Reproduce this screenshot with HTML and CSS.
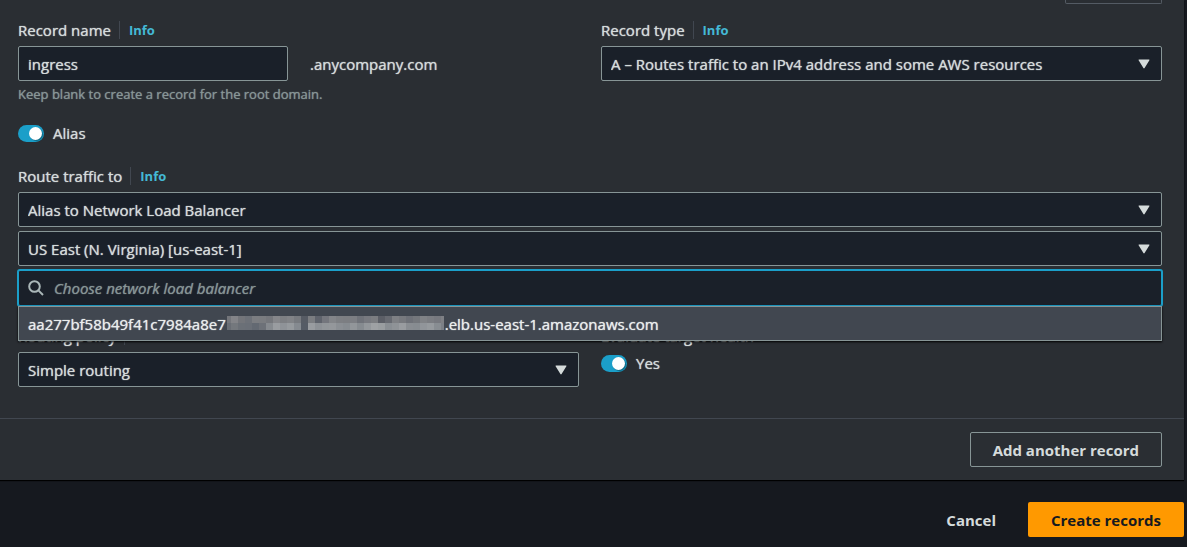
FILE: index.html
```html
<!DOCTYPE html>
<html lang="en">
<head>
<meta charset="utf-8">
<title>Create record</title>
<link rel="stylesheet" href="styles.css">
</head>
<body>
<form class="page">
  <section class="panel">
    <div class="record">
      <div class="record-head"><button class="delete" type="button" aria-label="Delete record" disabled></button></div>

      <div class="columns">
        <div class="field">
          <div class="label-row"><label for="name">Record name</label><a class="info" href="#name-info">Info</a></div>
          <div class="name-row">
            <input class="control name-input" id="name" type="text" value="ingress">
            <span>.anycompany.com</span>
          </div>
          <p class="hint">Keep blank to create a record for the root domain.</p>
        </div>
        <div class="field">
          <div class="label-row"><label for="type">Record type</label><a class="info" href="#type-info">Info</a></div>
          <div class="select">
            <select class="control" id="type"><option>A – Routes traffic to an IPv4 address and some AWS resources</option></select>
            <svg class="caret" viewBox="0 0 12 10"><path d="M1 .5h10a.5.5 0 0 1 .4.8L6.6 9a.7.7 0 0 1-1.200 0L.6 1.300A.5.5 0 0 1 1 .5z"/></svg>
          </div>
        </div>
      </div>

      <label class="toggle alias"><input type="checkbox" checked>Alias</label>

      <div class="label-row"><label for="target">Route traffic to</label><a class="info" href="#route-info">Info</a></div>
      <div class="stack">
        <div class="select">
          <select class="control" id="target"><option>Alias to Network Load Balancer</option></select>
          <svg class="caret" viewBox="0 0 12 10"><path d="M1 .5h10a.5.5 0 0 1 .4.8L6.6 9a.7.7 0 0 1-1.200 0L.6 1.300A.5.5 0 0 1 1 .5z"/></svg>
        </div>
        <div class="select">
          <select class="control" aria-label="Region"><option>US East (N. Virginia) [us-east-1]</option></select>
          <svg class="caret" viewBox="0 0 12 10"><path d="M1 .5h10a.5.5 0 0 1 .4.8L6.6 9a.7.7 0 0 1-1.200 0L.6 1.300A.5.5 0 0 1 1 .5z"/></svg>
        </div>
        <div class="search">
          <input class="control search-input" type="text" aria-label="Load balancer" placeholder="Choose network load balancer">
          <svg class="glass" viewBox="0 0 16 16"><circle cx="6.500" cy="6.500" r="5.300"/><path d="M10.400 10.400 15 15"/></svg>
          <div class="menu" role="listbox">
            <div class="menu-item" role="option" aria-selected="true"><span>aa277bf58b49f41c7984a8e7</span><svg class="mosaic" viewBox="0 0 217 15" aria-hidden="true"></svg><span>.elb.us-east-1.amazonaws.com</span></div>
          </div>
        </div>
      </div>

      <div class="columns routing">
        <div class="field">
          <div class="label-row"><label for="policy">Routing policy</label><a class="info" href="#policy-info">Info</a></div>
          <div class="select">
            <select class="control" id="policy"><option>Simple routing</option></select>
            <svg class="caret" viewBox="0 0 12 10"><path d="M1 .5h10a.5.5 0 0 1 .4.8L6.6 9a.7.7 0 0 1-1.200 0L.6 1.300A.5.5 0 0 1 1 .5z"/></svg>
          </div>
        </div>
        <div class="field">
          <div class="label-row" id="health">Evaluate target health</div>
          <label class="toggle"><input type="checkbox" aria-describedby="health" checked>Yes</label>
        </div>
      </div>
    </div>
    <div class="panel-foot"><button class="button outline" type="button">Add another record</button></div>
  </section>
  <div class="actions">
    <button class="button plain" type="button">Cancel</button>
    <button class="button primary" type="submit">Create records</button>
  </div>
</form>
<script src="mosaic.js"></script>
</body>
</html>
```
FILE: styles.css
```css
* { box-sizing: border-box; }

body {
  margin: 0;
  min-height: 100vh;
  background: #16191f;
  color: #d5dbdb;
  font: 500 15px/22px "Open Sans", "Noto Sans", sans-serif;
  text-shadow: 0 0 1px currentColor;
}

.page { padding-right: 3px; }

.panel {
  background: #2a2e33;
  box-shadow: 0 1px 1px #000;
}

.record { padding: 0 22px 31px 18px; }

.record-head {
  display: flex;
  justify-content: flex-end;
  margin-bottom: 16px;
}

.delete {
  width: 97px;
  height: 4px;
  padding: 0;
  background: none;
  border: 1px solid #545b64;
  border-top: 0;
  border-radius: 0 0 2px 2px;
}

.columns {
  display: grid;
  grid-template-columns: 1fr 1fr;
  gap: 22px;
}

.label-row {
  display: flex;
  align-items: center;
  height: 20px;
  margin-bottom: 6px;
}

.info {
  margin-left: 8px;
  padding-left: 9px;
  border-left: 1px solid #414750;
  color: #44b9d6;
  font-size: 13px;
  font-weight: 700;
  line-height: 18px;
  text-decoration: none;
  text-shadow: none;
}

.control {
  display: block;
  width: 100%;
  height: 35px;
  margin: 0;
  padding: 0 9px;
  appearance: none;
  background: #1a2029;
  border: 1px solid #879596;
  border-radius: 2px;
  color: #d5dbdb;
  font: inherit;
  text-shadow: inherit;
}

.name-row {
  display: flex;
  align-items: center;
  gap: 22px;
}

.name-input { width: 270px; }

.hint {
  margin: 3px 0 0;
  color: #879596;
  font-size: 13px;
  line-height: 20px;
}

.select, .search { position: relative; }

.caret {
  position: absolute;
  right: 12px;
  top: 13px;
  width: 12px;
  height: 10px;
  fill: #d5dbdb;
  pointer-events: none;
}

.toggle {
  display: flex;
  align-items: center;
  gap: 9px;
}

.toggle input {
  display: flex;
  justify-content: flex-end;
  align-items: center;
  width: 26px;
  height: 17px;
  margin: 0;
  padding: 2px;
  appearance: none;
  background: #1b9fc9;
  border-radius: 9px;
}

.toggle input::before {
  content: "";
  width: 13px;
  height: 13px;
  background: #fff;
  border-radius: 50%;
  box-shadow: 1px 1px 1px #0b6581;
}

.alias { margin: 18px 0 22px; }

.stack {
  display: grid;
  gap: 4px;
}

.search-input {
  height: 36px;
  padding-left: 35px;
  border-color: #1b9fc9;
  box-shadow: 0 0 0 1px #1b9fc9;
}

.search-input::placeholder {
  color: #879596;
  font-style: italic;
  opacity: 1;
}

.glass {
  position: absolute;
  left: 10px;
  top: 10px;
  width: 16px;
  height: 16px;
  fill: none;
  stroke: #aab7b8;
  stroke-width: 2;
}

.menu {
  position: absolute;
  z-index: 1;
  top: 100%;
  left: 0;
  right: 0;
  background: #414750;
  border: 1px solid #879596;
  box-shadow: 0 1px 2px #000;
  color: #eaeded;
}

.menu-item {
  display: flex;
  align-items: center;
  height: 33px;
  padding: 0 9px;
}

.mosaic {
  width: 217px;
  height: 15px;
  margin: 0 1px;
}

.routing { margin-top: 20px; }

.panel-foot {
  display: flex;
  justify-content: flex-end;
  padding: 13px 22px;
  border-top: 1px solid #414750;
}

.button {
  height: 35px;
  padding: 0 22px;
  border: 1px solid transparent;
  border-radius: 2px;
  background: none;
  color: #d5dbdb;
  font: inherit;
  font-weight: 700;
}

.outline { border-color: #879596; }

.actions {
  display: flex;
  justify-content: flex-end;
  gap: 9px;
  padding: 22px 0 9px;
}

.primary {
  background: #ff9900;
  color: #16191f;
}
```
FILE: mosaic.js
```js
// Masks the private part of the host name with two rows of grey blocks.
const rows = [
  "#74767b #838488 #73757a #6d7178 #7b7d81 #7a7c80 #75777c #85868a #7d7f83 #818387 #777a7f #565b64 #7b7d81 #5f636c #74767d #838589 #7d7f83 #7c7e82 #7c7e83 #6f7279 #77797f #7b7d81 #5b5e66 #676a71 #7e8084 #77797e #6e7178 #74777c #808286 #7b7d82 #77797f #7e8085",
  "#6a6e75 #74787d #6b7077 #6a6f77 #636972 #6d7178 #868a8f #999ca0 #8f9398 #969a9e #858a90 #555b65 #999ca0 #8d9196 #92969a #94979b #8b8f94 #878c91 #92969a #868b90 #93979b #9ea1a4 #999da0 #898e93 #8f9397 #999ca0 #898d92 #878c91 #91959a #969a9e #888d92 #7b8087"
];
const svg = document.querySelector(".mosaic");
rows.forEach((row, r) => {
  row.split(" ").forEach((fill, i) => {
    const block = document.createElementNS("http://www.w3.org/2000/svg", "rect");
    block.setAttribute("x", i ? 7 * i - 3 : 0);
    block.setAttribute("y", r * 7);
    block.setAttribute("width", i ? 7 : 4);
    block.setAttribute("height", 7);
    block.setAttribute("fill", fill);
    svg.append(block);
  });
});
```
